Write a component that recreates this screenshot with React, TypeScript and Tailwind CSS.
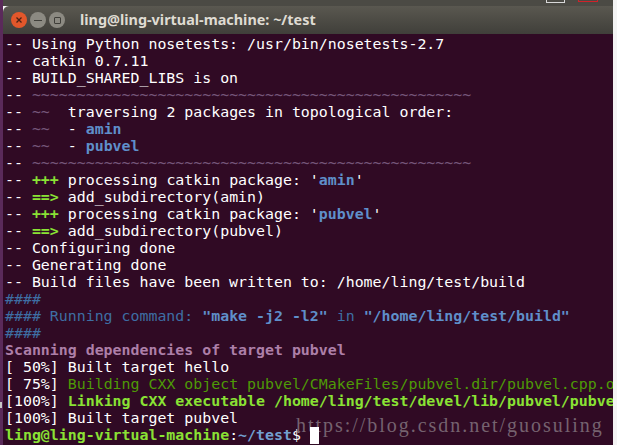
import React from 'react';

const dim = 'text-[#75567a]';
const blue = 'text-[#5f8fca]';
const darkBlue = 'text-[#3e6ea3]';
const green = 'text-[#4e9a06]';
const lime = 'text-[#8ae234] font-bold';

const Line = ({ children }: { children: React.ReactNode }) => (
  <div className="h-[17px] whitespace-pre">{children}</div>
);

const App: React.FC = () => {
  return (
    <div className="flex h-[445px] w-[617px] overflow-hidden bg-[#f4f4f4] pr-[4px]">
      <div className="relative w-[3px] shrink-0 bg-[#5a2a5a]">
        {/* Resize handle sliver on the window edge */}
        <div className="absolute left-0 top-[402px] h-[6px] w-[2px] bg-[#c8c8c8]" />
      </div>
      <div className="flex min-w-0 flex-1 flex-col">
        {/* Top strip left over from the desktop */}
        <div className="relative h-[6px] shrink-0 bg-[#4b4a44]">
          <div className="absolute left-[543px] top-0 h-[3px] w-[19px] border-x border-b border-[#d8d8d8]" />
          <div className="absolute left-[575px] top-0 h-[2px] w-[20px] border-x border-b border-[#d0222a]" />
        </div>

        {/* Title bar */}
        <div className="flex h-[28px] shrink-0 items-center rounded-tl-[6px] bg-gradient-to-b from-[#5a5850] to-[#403f3a] pl-[8px]">
          <div className="flex gap-[3px]">
            <div className="flex h-[16px] w-[16px] items-center justify-center rounded-full bg-[#e2572b]">
              <svg width="8" height="8" viewBox="0 0 8 8">
                <path d="M1.5 1.5 L6.5 6.5 M6.5 1.5 L1.5 6.5" stroke="#4a2215" strokeWidth="1.3" />
              </svg>
            </div>
            <div className="flex h-[16px] w-[16px] items-center justify-center rounded-full bg-[#8c8a82]">
              <div className="h-[1px] w-[8px] bg-[#3f3e39]" />
            </div>
            <div className="flex h-[16px] w-[16px] items-center justify-center rounded-full bg-[#8c8a82]">
              <div className="h-[7px] w-[7px] rounded-[1px] border border-[#3f3e39]" />
            </div>
          </div>
          <span className="ml-[15px] font-['Noto_Sans',sans-serif] text-[14.4px] font-bold text-[#dfdbd2]">
            ling@ling-virtual-machine: ~/test
          </span>
        </div>

        {/* Terminal output */}
        <div className="relative min-h-0 flex-1 overflow-hidden bg-[#300a24] pl-[2px] pt-[2px] font-['DejaVu_Sans_Mono',monospace] text-[14.9px] leading-[17px] text-[#ffffff]">
          <Line>-- Using Python nosetests: /usr/bin/nosetests-2.7</Line>
          <Line>-- catkin 0.7.11</Line>
          <Line>-- BUILD_SHARED_LIBS is on</Line>
          <Line>-- <span className={dim}>~~~~~~~~~~~~~~~~~~~~~~~~~~~~~~~~~~~~~~~~~~~~~~~~~</span></Line>
          <Line>-- <span className={dim}>~~</span>  traversing 2 packages in topological order:</Line>
          <Line>-- <span className={dim}>~~</span>  - <span className={`${blue} font-bold`}>amin</span></Line>
          <Line>-- <span className={dim}>~~</span>  - <span className={`${blue} font-bold`}>pubvel</span></Line>
          <Line>-- <span className={dim}>~~~~~~~~~~~~~~~~~~~~~~~~~~~~~~~~~~~~~~~~~~~~~~~~~</span></Line>
          <Line>-- <span className={lime}>+++</span> processing catkin package: '<span className={`${blue} font-bold`}>amin</span>'</Line>
          <Line>-- <span className={lime}>==&gt;</span> add_subdirectory(amin)</Line>
          <Line>-- <span className={lime}>+++</span> processing catkin package: '<span className={`${blue} font-bold`}>pubvel</span>'</Line>
          <Line>-- <span className={lime}>==&gt;</span> add_subdirectory(pubvel)</Line>
          <Line>-- Configuring done</Line>
          <Line>-- Generating done</Line>
          <Line>-- Build files have been written to: /home/ling/test/build</Line>
          <Line><span className={darkBlue}>####</span></Line>
          <Line>
            <span className={darkBlue}>#### Running command: </span>
            <span className={`${blue} font-bold`}>"make -j2 -l2"</span>
            <span className={darkBlue}> in </span>
            <span className={`${blue} font-bold`}>"/home/ling/test/build"</span>
          </Line>
          <Line><span className={darkBlue}>####</span></Line>
          <Line><span className="font-bold text-[#ad7fa8]">Scanning dependencies of target pubvel</span></Line>
          <Line>[ 50%] Built target hello</Line>
          <Line>[ 75%] <span className={green}>Building CXX object pubvel/CMakeFiles/pubvel.dir/pubvel.cpp.o</span></Line>
          <Line>[100%] <span className={lime}>Linking CXX executable /home/ling/test/devel/lib/pubvel/pubvel</span></Line>
          <Line>[100%] Built target pubvel</Line>
          <Line>
            <span className={lime}>ling@ling-virtual-machine</span>:<span className="font-bold text-[#729fcf]">~/test</span>$ <span className="relative z-10 inline-block h-[17px] w-[9px] align-top bg-white" />
          </Line>

          {/* Blog watermark */}
          <span className="absolute left-[293px] top-[381px] whitespace-pre font-['Liberation_Serif',serif] text-[20px] leading-[20px] tracking-[1.97px] text-[#75626f]">
            https://blog.csdn.net/guosuling
          </span>
        </div>
      </div>
    </div>
  );
};

export default App;
